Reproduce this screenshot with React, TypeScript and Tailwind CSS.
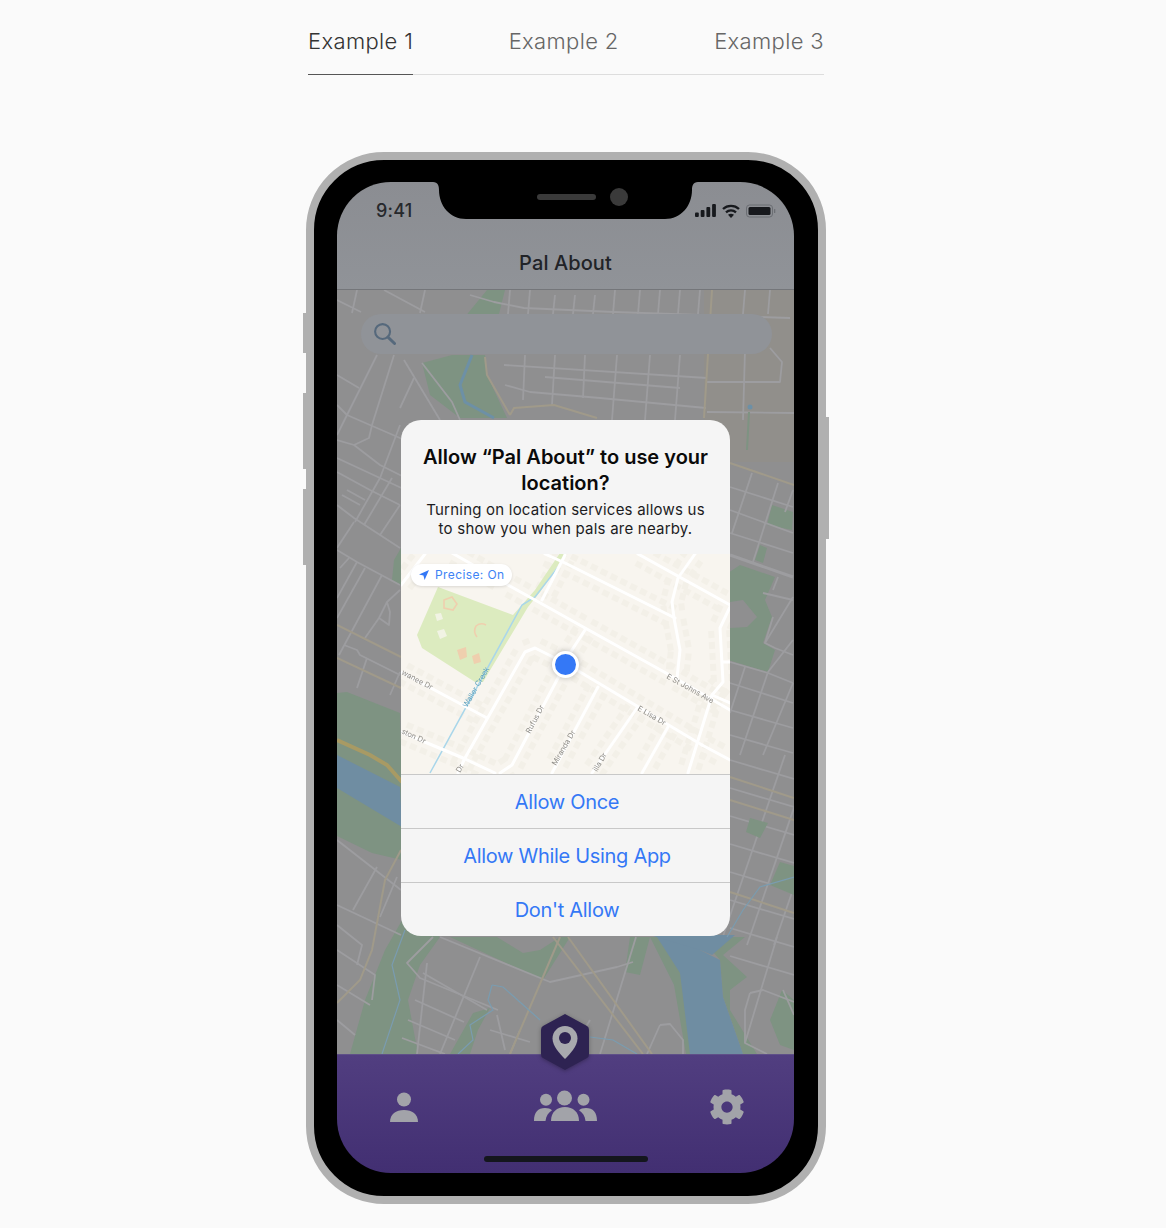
import React from 'react';
import { FaCog } from 'react-icons/fa';

const ROAD = '#9d9da0';
const TAN = '#a09a8a';
const GREEN = '#7e9382';
const WATER = '#6f8da2';
const LAND = '#8f8f90';

const bgGreens = [
  '464,318 487,290 505,290 498,318',
  '422,363 452,355 485,355 487,375 507,418 460,418 430,395',
  '337,693 347,692 400,713 402,790 402,860 372,853 337,836',
  '405,915 385,950 365,1000 350,1054 418,1054 408,1000 420,965 440,937',
  '450,937 497,937 523,953 540,950 560,937 570,937 543,980',
  '450,1054 473,1013 490,1008 478,1030 470,1054',
  '630,937 650,937 640,975 625,972',
  '650,937 660,937 684,973 694,1054 686,1054 674,985',
  '700,937 745,937 723,955 747,977 730,990 730,1010 757,1054 743,1054 723,997 720,960',
  '728,573 740,565 775,577 765,600 772,617 763,643 775,650 768,672 728,660',
  '772,505 793,512 792,530 767,525',
  '760,545 755,560 763,563 767,548',
  '394,560 401,548 401,585 392,580',
  '750,818 768,823 760,838 746,832',
  '794,1000 782,990 770,1020 780,1045 794,1050',
  '780,862 794,866 794,895 770,885',
];

const bgRoads = [
  '470,295 494,302 524,308 614,312 790,318',
  // upper left corner
  '337,300 361,312',
  '357,290 352,313',
  '384,290 425,312',
  '425,290 420,313',
  '337,375 359,388',
  '337,405 347,415 370,425 400,438 420,448',
  '377,355 347,415 337,435',
  '394,355 372,425 369,438 354,445',
  '337,440 354,445 380,465 410,480',
  '337,458 380,478 410,492',
  '337,472 370,490 400,505',
  '400,425 380,478 355,522',
  '392,478 364,525',
  '400,505 380,535',
  '337,505 354,518 400,548',
  '347,490 365,500',
  '342,495 360,505',
  '354,522 337,548',
  '337,550 357,562 400,585',
  '349,558 340,568',
  '357,562 337,598',
  '365,568 337,618',
  '382,575 339,655',
  '400,590 387,602 379,618 389,625 390,612 387,602',
  '379,618 365,638',
  '344,645 357,650 360,655 400,675',
  '367,658 357,688',
  '400,672 390,695',
  '422,363 452,402 460,420',
  '414,378 400,408',
  '404,360 440,420',
  // upper band below the search field
  '504,365 707,378',
  '545,377 680,388',
  '505,385 530,392 600,398 706,408',
  '707,382 780,382 782,362 770,348',
  '707,412 794,413',
  '525,355 523,400',
  '555,355 552,405',
  '585,355 583,398',
  '617,355 612,420',
  '650,355 645,420',
  '680,355 675,420',
  '745,350 743,420',
  '510,290 508,314',
  '530,290 528,314',
  '555,295 553,314',
  '575,295 573,314',
  '595,295 593,314',
  '615,290 613,314',
  '640,290 638,314',
  '660,290 658,314',
  '680,290 678,314',
  '700,290 698,314',
  '745,290 743,314',
  '770,290 768,314',
  // right of the dialog
  '730,487 793,507',
  '730,510 793,533',
  '730,533 793,553',
  '752,473 732,533',
  '778,483 753,562',
  '793,490 785,512',
  '793,597 765,643 775,648 793,655',
  '773,617 765,643',
  '763,593 793,600',
  '778,577 773,590',
  '793,640 768,672 740,755',
  '745,667 730,713',
  '793,683 763,755',
  '730,662 768,673 793,683',
  '730,683 793,703',
  '730,710 793,728',
  '730,735 793,753',
  // lower left
  '337,840 401,890',
  '377,867 353,910',
  '397,877 380,917',
  '337,905 401,935',
  '337,925 362,945 357,965',
  '337,985 370,1005',
  '337,950 375,975 372,1000',
  '337,1020 355,1035',
  // below the dialog
  '433,937 407,963 420,978 498,1010',
  '440,937 550,982 617,967 633,962',
  '636,937 600,1054',
  '427,963 417,1054',
  '480,957 440,1054',
  '423,973 487,1010',
  '415,1000 464,1022',
  '408,1020 455,1040',
  '402,1038 445,1054',
  '660,1025 647,1054',
  '660,1025 670,1024 683,1040 683,1054',
  '590,1020 575,1045',
  '777,937 760,993 745,1043 767,1054',
  '750,993 763,990 794,1002',
  '783,990 794,1015',
  '745,1043 745,1010 750,993',
  '497,1015 505,1050',
  '520,1030 510,1054',
  '490,1030 530,1042',
];

const tanRoads = [
  '485,357 487,375 510,415',
  '510,415 514,408 554,405 597,418',
  '712,290 704,418',
  '730,463 794,485',
  '337,625 401,657',
  '337,658 401,688',
  '730,777 794,798',
  '730,800 794,820',
  '730,892 794,913',
  '401,850 385,880 372,950 360,980 337,1003',
  '560,937 510,1054',
  '553,937 643,1054',
  '568,937 652,1054',
];

const creeks = [
  '727,937 743,910 760,887 794,877',
  '492,985 488,1000 493,1010 470,1025 473,1040 458,1054',
  '492,985 503,987 540,1020',
  '590,1037 613,1040 637,1054',
  '405,930 392,965 400,1000 382,1054',
];

// lower right block is a plain street grid
const rightA = Array.from({ length: 8 }, (_, i) => 760 + i * 28);
const rightB = Array.from({ length: 6 }, (_, i) => 730 + i * 27);

function BackgroundMap() {
  return (
    <svg viewBox="337 290 457 764" className="block w-full h-full blur-[0.5px]" fill="none">
      <rect x="337" y="290" width="457" height="764" fill={LAND} />
      <rect x="704" y="290" width="90" height="172" fill="#918f8b" />
      <g stroke={ROAD} strokeWidth="1.8">
        {rightA.map((y) => (
          <line key={y} x1="730" y1={y} x2="794" y2={y + 19} />
        ))}
        {rightB.map((x) => (
          <line key={x} x1={x + 55} y1="755" x2={x - 10} y2="945" />
        ))}
      </g>
      {bgGreens.map((p) => (
        <polygon key={p} points={p} fill={GREEN} />
      ))}
      <polygon points="730,602 743,600 757,617 747,627 730,628" fill={LAND} />
      <polygon points="337,755 400,787 402,827 337,788" fill={WATER} />
      <polygon points="657,937 733,937 700,950 720,960 723,997 743,1054 690,1054 680,973" fill={WATER} />
      <polygon points="650,935 735,935 712,955 700,950" fill={WATER} />
      <g stroke={ROAD} strokeWidth="1.8" strokeLinejoin="round">
        {bgRoads.map((p) => (
          <polyline key={p} points={p} />
        ))}
      </g>
      <polyline points="730,555 793,577" stroke={ROAD} strokeWidth="3" />
      <g stroke={TAN} strokeWidth="2">
        {tanRoads.map((p) => (
          <polyline key={p} points={p} />
        ))}
      </g>
      <polyline points="337,740 370,755 387,765 402,782" stroke="#a89a64" strokeWidth="4" />
      <g stroke="#7a9cb0" strokeWidth="1.2">
        {creeks.map((p) => (
          <polyline key={p} points={p} />
        ))}
      </g>
      <polyline points="472,355 460,385 465,402 494,418" stroke="#6d90a6" strokeWidth="3" />
      <circle cx="750" cy="407" r="2.5" fill="#6d90a6" />
      <polyline points="749,412 747,450" stroke={GREEN} strokeWidth="2" />
    </svg>
  );
}

const miniRoads = [
  '452,553 508,585 535,600 585,628 675,678 730,710',
  '545,554 565,563 675,618',
  '638,554 730,605',
  '695,554 678,578 672,602 674,618 680,650 677,678',
  '565,555 542,600',
  '730,607 720,628 723,682 712,695 688,773',
  '723,662 730,662',
  '712,695 730,703',
  '585,630 570,653 558,678 512,765 500,773',
  '565,663 535,648 525,652 465,758 458,773',
  '565,663 702,745',
  '702,745 730,760',
  '598,687 552,773',
  '637,708 592,773',
  '668,727 642,773',
  '401,672 487,718',
  '401,732 463,758 495,773',
  '401,585 425,554',
];

// little lots along a street, two rows of them
function lotsFor(points: string) {
  const pts = points.split(' ').map((p) => p.split(',').map(Number));
  const lots: { x: number; y: number; a: number }[] = [];
  for (let i = 0; i < pts.length - 1; i++) {
    const [x1, y1] = pts[i];
    const [x2, y2] = pts[i + 1];
    const len = Math.hypot(x2 - x1, y2 - y1);
    const nx = -(y2 - y1) / len;
    const ny = (x2 - x1) / len;
    const a = (Math.atan2(y2 - y1, x2 - x1) * 180) / Math.PI;
    for (let d = 6; d < len - 4; d += 11) {
      for (const side of [-9, 9]) {
        lots.push({ x: x1 + ((x2 - x1) * d) / len + nx * side, y: y1 + ((y2 - y1) * d) / len + ny * side, a });
      }
    }
  }
  return lots;
}

function DialogMap() {
  const lots = miniRoads.flatMap(lotsFor);
  return (
    <svg viewBox="401 554 329 220" className="block w-full h-full blur-[0.3px]" fill="none">
      <rect x="401" y="554" width="329" height="220" fill="#f8f5ef" />
      {lots.map((l, i) => (
        <rect
          key={i}
          x={l.x - 3.5}
          y={l.y - 3}
          width="7"
          height="6"
          fill="#f3f0e8"
          transform={`rotate(${l.a} ${l.x} ${l.y})`}
        />
      ))}
      <polygon
        points="438,587 417,635 422,648 475,682 483,682 528,607 540,592 565,555 560,553 535,590 513,615"
        fill="#dcebbf"
      />
      <g fill="#efcfae" stroke="none">
        <path d="M444 600 l8 -3 l5 7 l-4 6 l-9 -2z" fill="none" stroke="#efcfae" strokeWidth="1.6" />
        <path d="M486 625 a9 9 0 0 0 -10 1 a10 10 0 0 0 1 11" fill="none" stroke="#efcfae" strokeWidth="1.6" />
        <polygon points="457,650 466,647 467,657 460,660" />
        <polygon points="472,656 479,653 481,662 474,664" />
      </g>
      <g fill="#f1f3e4">
        <polygon points="435,614 441,613 443,619 437,621" />
        <polygon points="437,631 444,629 447,636 440,639" />
      </g>
      <polyline points="562,562 535,597 522,605 430,773" stroke="#a9d6ea" strokeWidth="1.5" />
      <g stroke="#ffffff" strokeWidth="3" strokeLinejoin="round" strokeLinecap="round">
        {miniRoads.map((p) => (
          <polyline key={p} points={p} />
        ))}
      </g>
      <g fontFamily="Inter, sans-serif" fontSize="7.5" fill="#8f8d88">
        <text x="666" y="678" transform="rotate(29 666 678)">E St Johns Ave</text>
        <text x="637" y="710" transform="rotate(30 637 710)">E Lisa Dr</text>
        <text x="530" y="734" transform="rotate(-62 530 734)">Rufus Dr</text>
        <text x="556" y="766" transform="rotate(-60 556 766)">Miranda Dr</text>
        <text x="597" y="772" transform="rotate(-60 597 772)">illa Dr</text>
        <text x="401" y="674" transform="rotate(28 401 674)">wanee Dr</text>
        <text x="401" y="733" transform="rotate(25 401 733)">ston Dr</text>
        <text x="460" y="773" transform="rotate(-60 460 773)">Dr</text>
        <text x="467" y="708" fill="#5a9fbd" transform="rotate(-60 467 708)">Waller Creek</text>
      </g>
    </svg>
  );
}

function StatusIcons() {
  return (
    <div className="flex items-center gap-[6px]">
      <svg width="21" height="13" viewBox="0 0 21 13" fill="#17191d">
        <rect x="0" y="8.500" width="3.800" height="4.500" rx="1" />
        <rect x="5.700" y="6" width="3.800" height="7" rx="1" />
        <rect x="11.400" y="3" width="3.800" height="10" rx="1" />
        <rect x="17.100" y="0" width="3.800" height="13" rx="1" />
      </svg>
      <svg width="18" height="14" viewBox="0 0 18 14" fill="none" stroke="#17191d" strokeWidth="2.300">
        <path d="M1 5 C5.500 .8 12.500 .8 17 5" />
        <path d="M4 8.300 C6.800 5.800 11.200 5.800 14 8.300" />
        <path d="M9 14 L6 10.800 C8 9.500 10 9.500 12 10.800 Z" fill="#17191d" stroke="none" />
      </svg>
      <svg width="30" height="14" viewBox="0 0 30 14" fill="none">
        <rect x=".5" y="1" width="26" height="12" rx="3" stroke="#6b6e73" />
        <rect x="2.500" y="3" width="22" height="8" rx="1.500" fill="#17191d" />
        <rect x="28" y="5" width="1.300" height="4" rx=".6" fill="#6b6e73" />
      </svg>
    </div>
  );
}

function PeopleIcon() {
  return (
    <svg width="63" height="31" viewBox="0 0 63 31" fill="#a2a3a9" className="ml-[3px]">
      <circle cx="12" cy="9.700" r="6" />
      <circle cx="30.500" cy="8" r="7.500" />
      <circle cx="49.500" cy="9.700" r="6" />
      <path d="M0 31 C0 22 4 18 11 18 C14 18 16.500 18.800 18 20.300 C14.500 22.500 12 26 11.500 31 Z" />
      <path d="M63 31 C63 22 59 18 52 18 C49 18 46.500 18.800 45 20.300 C48.500 22.500 51 26 51.500 31 Z" />
      <path d="M17 31 C17 22 23 17 31 17 C39 17 45 22 45 31 Z" />
    </svg>
  );
}

function ActionButton({ label }: { label: string }) {
  return (
    <div className="h-[54px] border-t border-[#c8c8c8] flex items-center justify-center pl-[3px] pt-[1px] text-[20px] tracking-[-0.3px] text-[#3478f6]">
      {label}
    </div>
  );
}

function Phone() {
  return (
    <div className="relative w-[520px] h-[1052px] mt-[77px] -ml-[2px] rounded-[78px] border-[8px] border-[#b0b0b0] bg-black pt-[22px] pl-[23px] pr-[24px] pb-[23px]">
      {/* side buttons */}
      <div className="absolute -left-[11px] top-[153px] h-[40px] w-[3px] bg-[#b0b0b0]" />
      <div className="absolute -left-[11px] top-[233px] h-[76px] w-[3px] bg-[#b0b0b0]" />
      <div className="absolute -left-[11px] top-[329px] h-[76px] w-[3px] bg-[#b0b0b0]" />
      <div className="absolute -right-[11px] top-[257px] h-[122px] w-[3px] bg-[#b0b0b0]" />

      <div className="relative w-[457px] h-[991px] rounded-[54px] overflow-hidden flex flex-col">
        <div className="h-[108px] shrink-0 bg-gradient-to-b from-[#8b8d92] to-[#909398] border-b border-[#74767a] flex flex-col">
          <div className="flex items-center justify-between pl-[39px] pr-[18px] pt-[18px]">
            <span className="mt-[1px] text-[18px] leading-5 font-medium tracking-[0.2px] text-[#26282c]">9:41</span>
            <StatusIcons />
          </div>
          <div className="mt-[30px] text-center text-[20px] leading-6 font-medium tracking-[0.1px] text-[#212327]">
            Pal About
          </div>
        </div>

        <div className="relative h-[764px] shrink-0 bg-[#8f8f90]">
          <BackgroundMap />
          <div className="absolute left-[24px] top-[24px] w-[411px] h-[40px] rounded-[20px] bg-[#909398] flex items-center pl-[12px] pb-[2px]">
            <svg width="23" height="23" viewBox="0 0 24 24" fill="none" stroke="#56697c" strokeWidth="2.200">
              <circle cx="10" cy="10" r="7.800" />
              <line x1="15.600" y1="15.800" x2="22.500" y2="22.500" strokeWidth="3" strokeLinecap="round" />
            </svg>
          </div>
        </div>

        <div className="flex-1 bg-gradient-to-b from-[#513e80] to-[#422f72] border-t border-[#5f5088] flex flex-col">
          <div className="flex items-start justify-between pt-[35px] pl-[53px] pr-[49px]">
            <svg width="28" height="30" viewBox="0 0 28 30" fill="#a2a3a9" className="mt-[2px]">
              <circle cx="14" cy="7.500" r="7" />
              <path d="M0 30 C0 22 6 18 14 18 C22 18 28 22 28 30 Z" />
            </svg>
            <PeopleIcon />
            <FaCog size={36} color="#a2a3a9" className="-mt-[1px]" />
          </div>
          <div className="mt-auto mb-[11px] mx-auto w-[164px] h-[6px] rounded-full bg-[#14161d]" />
        </div>

        {/* location marker sits over the map edge */}
        <div className="absolute left-[203px] top-[831px] w-[50px] h-[58px] drop-shadow-[0_1px_2px_rgba(0,0,0,0.3)]">
          <svg width="50" height="58" viewBox="0 0 50 58">
            <path
              d="M25 1 L47 13 Q49 14 49 17 V41 Q49 44 47 45 L25 57 L3 45 Q1 44 1 41 V17 Q1 14 3 13 Z"
              fill="#2e2352"
            />
            <path
              d="M25 13 C32 13 37.500 18.500 37.500 25.500 C37.500 33 30 41 25 46 C20 41 12.500 33 12.500 25.500 C12.500 18.500 18 13 25 13 Z"
              fill="#a8a9ae"
            />
            <circle cx="25" cy="25" r="6" fill="#2e2352" />
          </svg>
        </div>

        {/* location permission dialog */}
        <div className="absolute left-[64px] top-[238px] w-[329px] rounded-[20px] overflow-hidden bg-[#f5f5f5]">
          <div className="pt-[24px] pb-[16px] text-center">
            <h2 className="px-[16px] text-[20px] leading-[26px] font-semibold text-[#0a0a0a]">
              Allow “Pal About” to use your location?
            </h2>
            <p className="mt-[4px] px-[24px] text-[15px] leading-[19px] tracking-[0.22px] text-[#1c1c1e]">
              Turning on location services allows us to show you when pals are nearby.
            </p>
          </div>
          <div className="relative h-[220px] overflow-hidden bg-[#f8f5ef]">
            <DialogMap />
            <div className="absolute left-[10px] top-[10px] h-[22px] w-[101px] rounded-full bg-white shadow-[0_1px_3px_rgba(0,0,0,0.12)] flex items-center pl-[8px] gap-[6px] text-[12px] tracking-[0.4px] text-[#3d83f5]">
              <svg width="10" height="10" viewBox="0 0 10 10" fill="#3478f6">
                <path d="M10 0 L5.600 10 L4.400 5.600 L0 4.400 Z" />
              </svg>
              Precise: On
            </div>
            <div className="absolute left-[151px] top-[97px] w-[27px] h-[27px] rounded-full bg-[#3478f6] border-[3px] border-white shadow-[0_0_6px_rgba(0,0,0,0.25)]" />
          </div>
          <ActionButton label="Allow Once" />
          <ActionButton label="Allow While Using App" />
          <ActionButton label="Don't Allow" />
        </div>

        {/* notch */}
        <div className="absolute left-[96px] top-0 w-[265px] h-[37px]">
          <svg width="265" height="37" viewBox="0 0 265 37" className="absolute inset-0">
            <path d="M0 0 H265 C260 0 259 4 259 8 C259 24 248 37 232 37 H33 C17 37 6 24 6 8 C6 4 5 0 0 0 Z" fill="#000000" />
          </svg>
          <div className="relative flex items-center h-[30px] pl-[104px] gap-[14px]">
            <div className="w-[59px] h-[6px] rounded-full bg-[#3a3a3a]" />
            <div className="w-[18px] h-[18px] rounded-full bg-[#3a3a3a]" />
          </div>
        </div>
      </div>
    </div>
  );
}

export default function App() {
  return (
    <div className="min-h-screen bg-[#fafafa] pl-[308px] font-['Inter',sans-serif] overflow-hidden">
      <div className="w-[516px] h-[75px] border-b border-[#dddddd] flex justify-between text-[22px] leading-[30px] font-light tracking-[0.35px] text-[#666666]">
        <div className="h-[75px] pt-[26px] border-b border-[#555555] text-[#333333]">Example 1</div>
        <div className="pt-[26px]">Example 2</div>
        <div className="pt-[26px]">Example 3</div>
      </div>
      <Phone />
    </div>
  );
}
